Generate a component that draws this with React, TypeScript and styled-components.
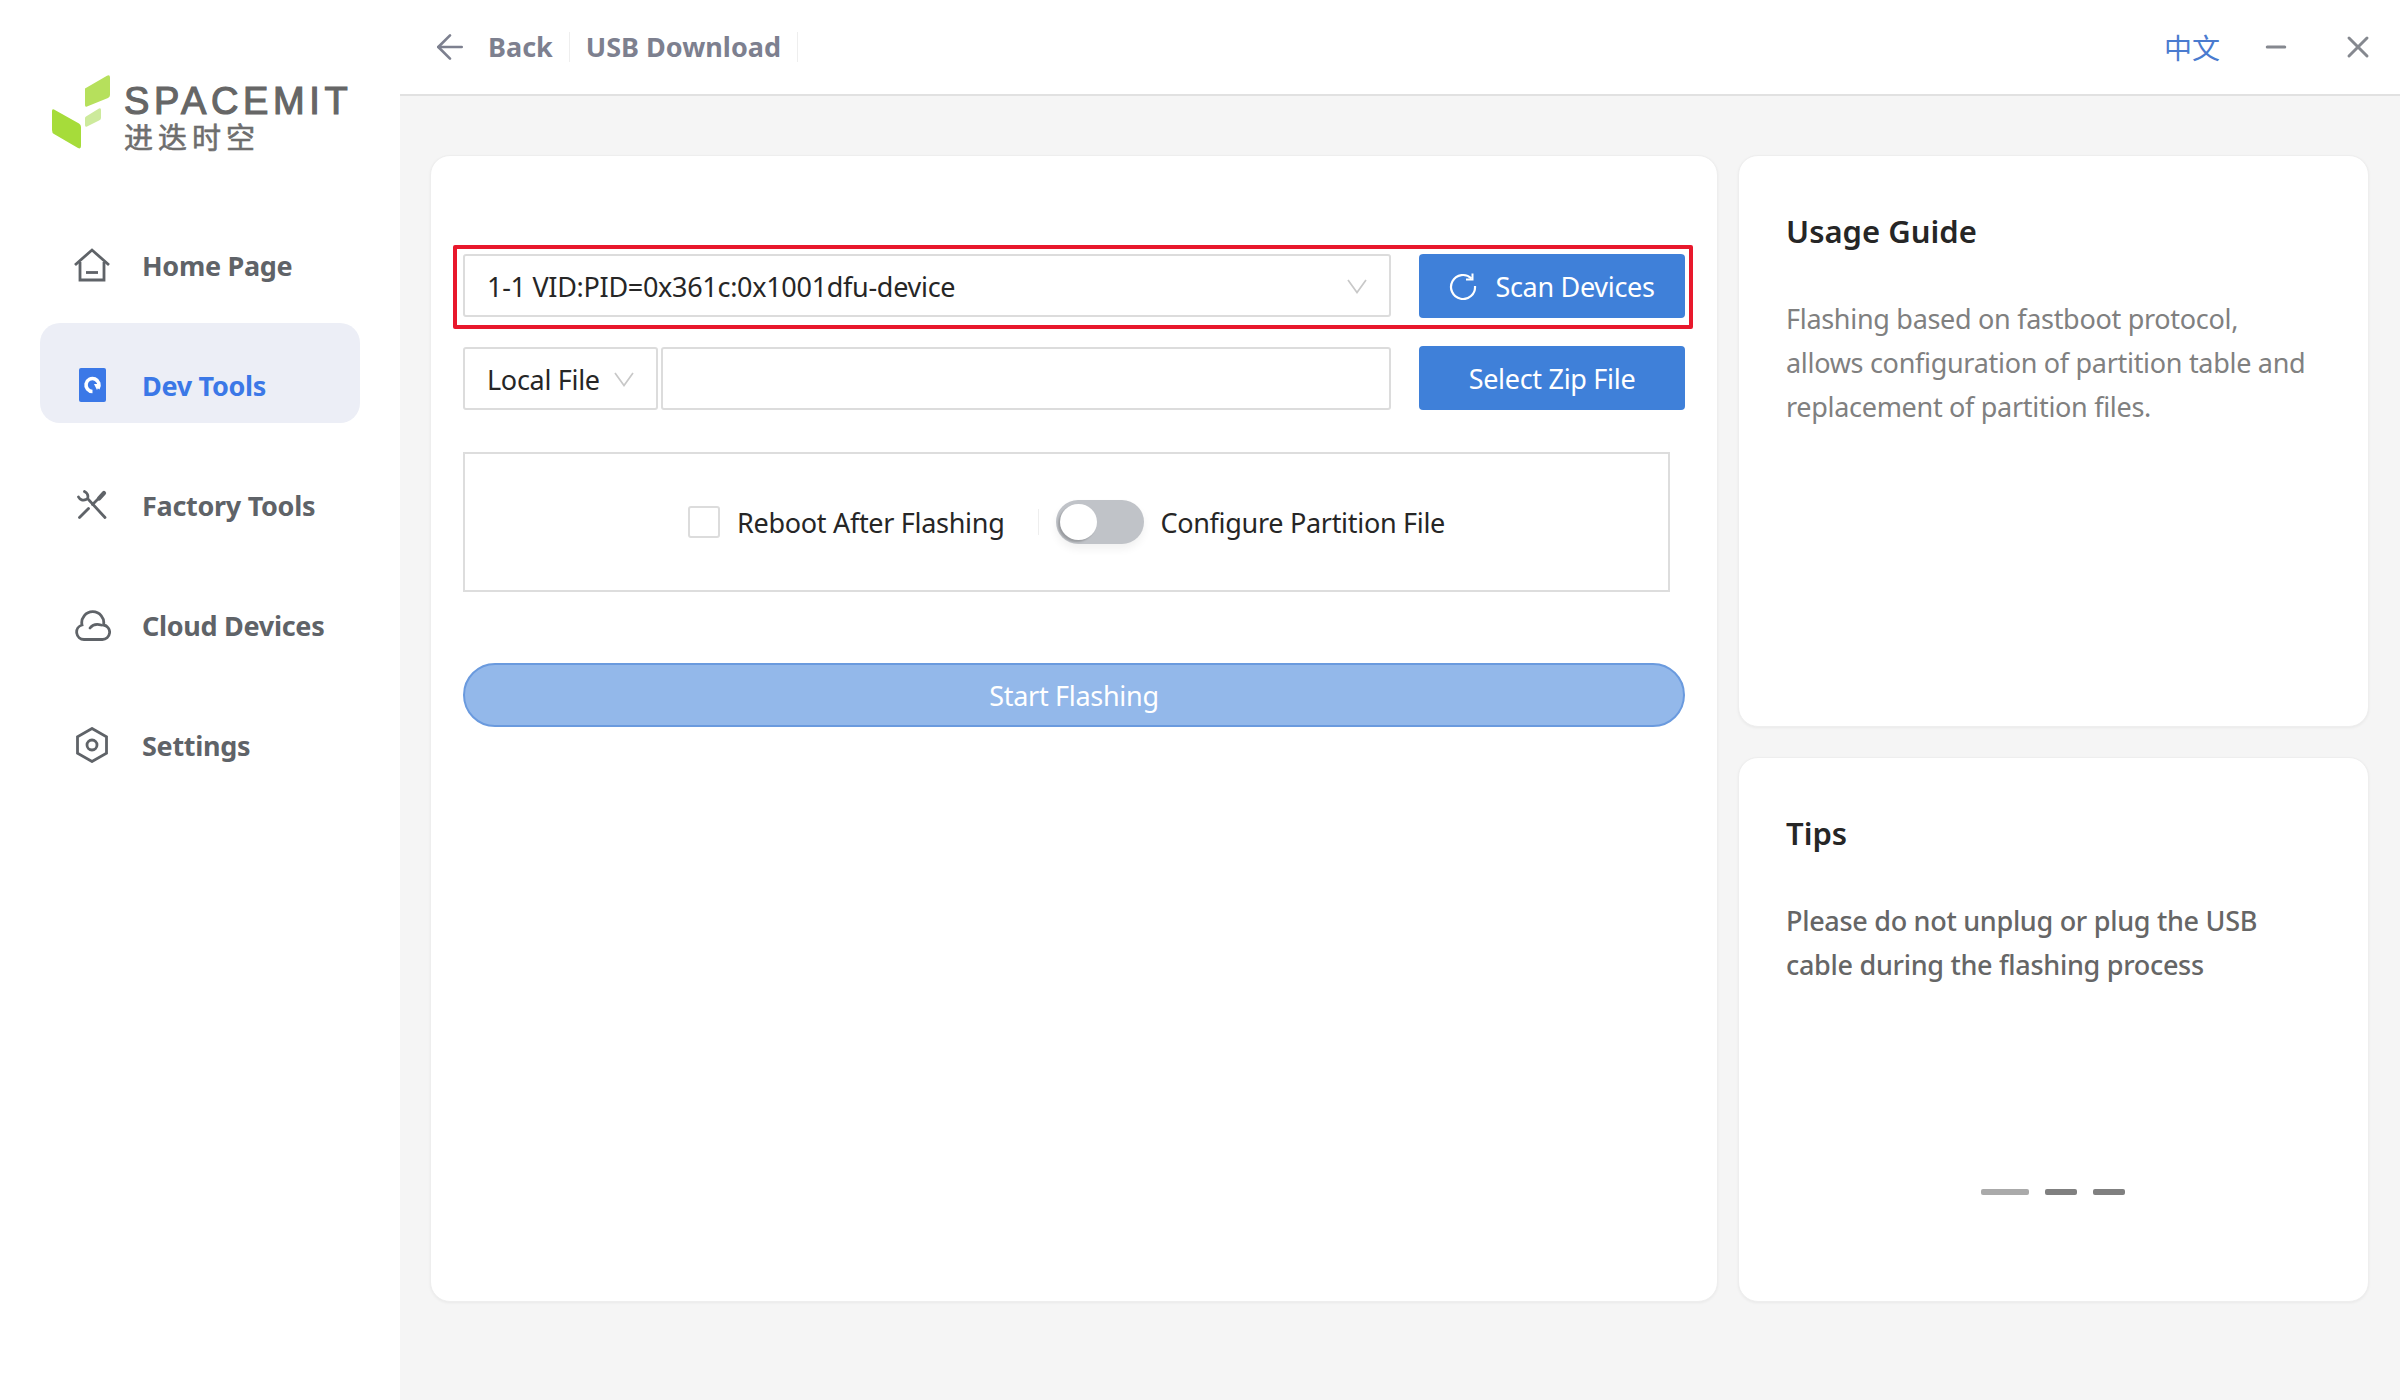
import React from "react";
import styled, { createGlobalStyle } from "styled-components";
import { ArrowLeft, Minus, X } from "lucide-react";

const FONT = `"Noto Sans", "Noto Sans CJK SC", sans-serif`;

const GlobalStyle = createGlobalStyle`
  html, body {
    margin: 0;
    padding: 0;
    background: #f5f5f5;
  }
  * {
    box-sizing: border-box;
  }
`;

const Page = styled.div`
  display: flex;
  width: 2400px;
  height: 1400px;
  overflow: hidden;
  font-family: ${FONT};
  font-size: 27px;
  letter-spacing: -0.3px;
  background: #f5f5f5;
`;

const Sidebar = styled.aside`
  display: flex;
  flex-direction: column;
  width: 400px;
  background: #fff;
`;

const Logo = styled.div`
  display: flex;
  gap: 13px;
  height: 203px;
  padding: 75px 0 0 52px;
`;

const LogoText = styled.div`
  display: flex;
  flex-direction: column;
`;

const LogoName = styled.span`
  height: 28px;
  margin-top: 12px;
  font-family: "Liberation Sans", sans-serif;
  font-size: 38px;
  line-height: 28px;
  letter-spacing: 4.6px;
  color: #666;
  -webkit-text-stroke: 1.2px #666;
`;

const LogoCjk = styled.span`
  height: 26px;
  margin-top: 8px;
  font-family: "Noto Sans CJK SC", sans-serif;
  font-size: 29px;
  line-height: 26px;
  letter-spacing: 5px;
  color: #6e6e6e;
  -webkit-text-stroke: 0.6px #6e6e6e;
`;

const Nav = styled.nav`
  display: flex;
  flex-direction: column;
  gap: 20px;
  padding: 0 40px;
`;

const NavItem = styled.div<{ $active?: boolean }>`
  display: flex;
  align-items: center;
  height: 100px;
  padding: 24px 0 0 32px;
  border-radius: 20px;
  font-weight: 700;
  color: ${({ $active }) => ($active ? "#3b78e7" : "#5f6368")};
  background: ${({ $active }) => ($active ? "#eceef6" : "transparent")};
`;

const NavIcon = styled.span`
  display: flex;
  justify-content: center;
  align-items: center;
  width: 40px;
  margin-right: 30px;
`;

const Content = styled.div`
  display: flex;
  flex: 1;
  flex-direction: column;
  min-width: 0;
`;

const Header = styled.header`
  display: flex;
  align-items: center;
  height: 96px;
  padding: 0 24px 0 30px;
  border-bottom: 2px solid #e1e1e1;
  background: #fff;
`;

const BackArrow = styled(ArrowLeft)`
  margin-right: 18px;
  color: #7d808f;
`;

const Crumb = styled.span`
  padding-right: 16px;
  margin-right: 16px;
  border-right: 1px solid #eeeeee;
  line-height: 30px;
  font-weight: 700;
  letter-spacing: 0;
  color: #7d808f;
`;

const HeaderRight = styled.div`
  display: flex;
  align-items: center;
  margin-left: auto;
`;

const Lang = styled.span`
  margin-right: 41px;
  font-size: 28px;
  letter-spacing: 0;
  color: #4a7bcf;
`;

const WindowMinus = styled(Minus)`
  margin-right: 49px;
  color: #85888f;
`;

const WindowClose = styled(X)`
  color: #85888f;
`;

const Body = styled.main`
  display: grid;
  flex: 1;
  grid-template-columns: 1288px 631px;
  gap: 20px;
  padding: 59px 31px 98px 30px;
`;

const Card = styled.section`
  border: 1px solid #eeeeee;
  border-radius: 20px;
  background: #fff;
  box-shadow: 0 1px 3px rgba(0, 0, 0, 0.05);
`;

const FormCard = styled(Card)`
  padding: 89px 0 0 22px;
`;

const Side = styled.div`
  display: grid;
  grid-template-rows: 572px 1fr;
  gap: 30px;
`;

const GuideCard = styled(Card)`
  position: relative;
  padding: 53px 60px 0 47px;
`;

const GuideTitle = styled.h2`
  margin: 0 0 44px;
  font-size: 31px;
  line-height: 44px;
  font-weight: 600;
  letter-spacing: 0;
  color: #262626;
`;

const GuideText = styled.p<{ $strong?: boolean }>`
  margin: 0;
  line-height: 44px;
  font-weight: ${({ $strong }) => ($strong ? 500 : 400)};
  color: ${({ $strong }) => ($strong ? "#666" : "#808080")};
`;

const Dots = styled.div`
  position: absolute;
  left: 242px;
  top: 431px;
  display: flex;
  gap: 16px;
`;

const Dot = styled.span<{ $wide?: boolean }>`
  width: ${({ $wide }) => ($wide ? 48 : 32)}px;
  height: 6px;
  border-radius: 2px;
  background: ${({ $wide }) => ($wide ? "#aaaaaa" : "#808080")};
`;

const ScanRow = styled.div`
  display: flex;
  gap: 28px;
  width: 1240px;
  padding: 5px 4px 7px 6px;
  border: 4px solid #e8182c;
  border-radius: 2px;
`;

const FileRow = styled.div`
  display: flex;
  align-items: center;
  gap: 28px;
  width: 1232px;
  margin: 17px 0 0 10px;
`;

const FileFields = styled.div`
  display: flex;
  gap: 3px;
  width: 928px;
`;

const Field = styled.div<{ $width?: number }>`
  display: flex;
  align-items: center;
  flex: ${({ $width }) => ($width ? `0 0 ${$width}px` : "1")};
  height: 63px;
  padding: 2px 22px 0;
  border: 2px solid #dcdcdc;
  border-radius: 3px;
  white-space: nowrap;
  color: #262626;
  background: #fff;
`;

const ChevronSvg = styled.svg`
  flex: none;
  margin-left: auto;
  fill: none;
  stroke: #c8c8c8;
  stroke-width: 1.7;
`;

const Chevron = () => (
  <ChevronSvg width="20" height="15" viewBox="0 0 20 15">
    <path d="M1 1 L10 13.5 L19 1" />
  </ChevronSvg>
);

const BlueButton = styled.button`
  display: flex;
  justify-content: center;
  align-items: center;
  gap: 18px;
  flex: 0 0 266px;
  height: 64px;
  padding: 0;
  border: 0;
  border-radius: 4px;
  font-family: ${FONT};
  font-size: 27px;
  letter-spacing: -0.3px;
  color: #fff;
  background: #3f80d9;
`;

const Options = styled.div`
  display: flex;
  justify-content: center;
  align-items: center;
  width: 1207px;
  height: 140px;
  margin: 42px 0 0 10px;
  border: 2px solid #dddddd;
  color: #262626;
`;

const Checkbox = styled.span`
  width: 32px;
  height: 32px;
  margin-right: 17px;
  border: 2px solid #dcdcdc;
  border-radius: 3px;
`;

const OptionDivider = styled.span`
  width: 1px;
  height: 26px;
  margin: 0 17px 0 34px;
  background: #eeeeee;
`;

const Toggle = styled.span`
  position: relative;
  width: 88px;
  height: 44px;
  margin-right: 16px;
  border-radius: 22px;
  background: #c0c3c8;
  box-shadow: 0 5px 8px rgba(0, 0, 0, 0.06);
`;

const Knob = styled.span`
  position: absolute;
  left: 4px;
  top: 4px;
  width: 37px;
  height: 36px;
  border-radius: 50%;
  background: #fff;
  box-shadow: -2px 2px 2px rgba(0, 0, 0, 0.2);
`;

const StartButton = styled.button`
  display: block;
  width: 1222px;
  height: 64px;
  margin: 71px 0 0 10px;
  padding: 0;
  border: 2px solid #6a9ade;
  border-radius: 32px;
  font-family: ${FONT};
  font-size: 27px;
  letter-spacing: -0.3px;
  color: #fff;
  background: #93b8ea;
`;

const RefreshIcon = () => (
  <svg width="28" height="27" viewBox="0 0 28 27" fill="none" stroke="#fff" strokeWidth="2.2">
    <path d="M22.5 5.5 A12 12 0 1 0 26 13" />
    <path d="M23.5 0.5 V6.5 H17" strokeWidth="2" />
  </svg>
);

const HomeIcon = () => (
  <svg width="36" height="34" viewBox="0 0 36 34" fill="none" stroke="#5f6368" strokeWidth="2.8">
    <path d="M1 17 L18 2 L35 17" />
    <path d="M6 14 V32 H30 V14" />
    <path d="M12 24.5 H24" />
  </svg>
);

const DevIcon = () => (
  <svg width="27" height="34" viewBox="0 0 27 34">
    <rect width="27" height="34" rx="2" fill="#3b78e7" />
    <path d="M19 20.5 A6.5 6.5 0 1 0 13.5 23.5" fill="none" stroke="#fff" strokeWidth="3.6" />
    <path d="M15 16 L21 16 L18 22 Z" fill="#fff" />
  </svg>
);

const FactoryIcon = () => (
  <svg width="30" height="30" viewBox="0 0 30 30" fill="none" stroke="#5f6368" strokeWidth="2.8" strokeLinecap="round">
    <path d="M7.5 1.5 A5.5 5.5 0 0 1 10.5 8.5 L28 27.5" />
    <path d="M1.5 7 A5.5 5.5 0 0 0 9 9.5" />
    <path d="M2.5 27.5 L11.5 18.5" />
    <path d="M15.5 14.5 L21 9" />
    <path d="M22 8.5 L27 3" strokeWidth="4.2" />
  </svg>
);

const CloudIcon = () => (
  <svg width="37" height="32" viewBox="0 0 37 32" fill="none" stroke="#5f6368" strokeWidth="2.8" strokeLinecap="round">
    <path d="M10 30.5 H28 A7.3 7.3 0 0 0 29.5 16 A11 11 0 1 0 8 16 A7.4 7.4 0 0 0 10 30.5 Z" />
    <path d="M16 19 Q20 14 27 16" />
  </svg>
);

const SettingsIcon = () => (
  <svg width="32" height="36" viewBox="0 0 32 36" fill="none" stroke="#5f6368" strokeWidth="2.8">
    <path d="M16 1.5 L30.5 9.8 V26.2 L16 34.5 L1.5 26.2 V9.8 Z" />
    <circle cx="16" cy="18" r="5" />
  </svg>
);

const LogoMark = () => (
  <svg width="59" height="74" viewBox="0 0 59 74">
    <path d="M2 34.5 L27 48.5 Q29 49.5 29 52 V71 Q29 74.5 26 73 L2 59 Q0 58 0 55 V36 Q0 33.5 2 34.5 Z" fill="#a6dc3a" />
    <path d="M33 13.5 L55 .8 Q58 -.6 58 2.5 V20 Q58 22 56 23 L35 31.5 Q33 32.5 33 30 V16 Q33 14.5 33 13.5 Z" fill="#b6e05c" />
    <path d="M34 41.5 L47 33.5 Q49 32.5 49 35 V43 Q49 44.5 47 45.5 L35 51.5 Q33 52.5 33 50 V43 Q33 42 34 41.5 Z" fill="#cdea9c" />
  </svg>
);

const navItems = [
  { label: "Home Page", icon: <HomeIcon /> },
  { label: "Dev Tools", icon: <DevIcon />, active: true },
  { label: "Factory Tools", icon: <FactoryIcon /> },
  { label: "Cloud Devices", icon: <CloudIcon /> },
  { label: "Settings", icon: <SettingsIcon /> },
];

const App = () => (
  <Page>
    <GlobalStyle />
    <Sidebar>
      <Logo>
        <LogoMark />
        <LogoText>
          <LogoName>SPACEMIT</LogoName>
          <LogoCjk>进迭时空</LogoCjk>
        </LogoText>
      </Logo>
      <Nav>
        {navItems.map((item) => (
          <NavItem key={item.label} $active={item.active}>
            <NavIcon>{item.icon}</NavIcon>
            {item.label}
          </NavItem>
        ))}
      </Nav>
    </Sidebar>
    <Content>
      <Header>
        <BackArrow size={40} strokeWidth={1.6} />
        <Crumb>Back</Crumb>
        <Crumb>USB Download</Crumb>
        <HeaderRight>
          <Lang>中文</Lang>
          <WindowMinus size={30} strokeWidth={2.4} />
          <WindowClose size={36} strokeWidth={2} />
        </HeaderRight>
      </Header>
      <Body>
        <FormCard>
          <ScanRow>
            <Field $width={928}>
              1-1 VID:PID=0x361c:0x1001dfu-device
              <Chevron />
            </Field>
            <BlueButton>
              <RefreshIcon />
              Scan Devices
            </BlueButton>
          </ScanRow>
          <FileRow>
            <FileFields>
              <Field $width={195}>
                Local File
                <Chevron />
              </Field>
              <Field />
            </FileFields>
            <BlueButton>Select Zip File</BlueButton>
          </FileRow>
          <Options>
            <Checkbox />
            Reboot After Flashing
            <OptionDivider />
            <Toggle>
              <Knob />
            </Toggle>
            Configure Partition File
          </Options>
          <StartButton>Start Flashing</StartButton>
        </FormCard>
        <Side>
          <GuideCard>
            <GuideTitle>Usage Guide</GuideTitle>
            <GuideText>
              Flashing based on fastboot protocol, allows configuration of partition table and replacement of partition files.
            </GuideText>
          </GuideCard>
          <GuideCard>
            <GuideTitle>Tips</GuideTitle>
            <GuideText $strong>
              Please do not unplug or plug the USB cable during the flashing process
            </GuideText>
            <Dots>
              <Dot $wide />
              <Dot />
              <Dot />
            </Dots>
          </GuideCard>
        </Side>
      </Body>
    </Content>
  </Page>
);

export default App;
